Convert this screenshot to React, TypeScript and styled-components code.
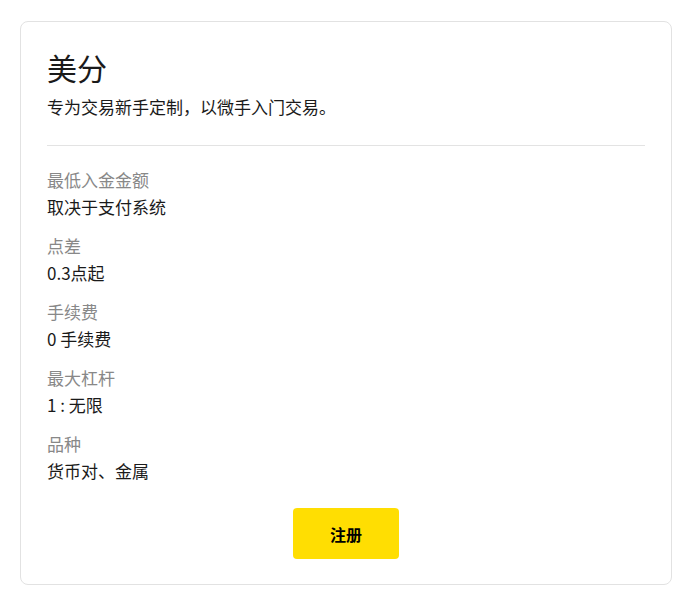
import styled, { createGlobalStyle } from "styled-components";

const GlobalStyle = createGlobalStyle`
  body {
    margin: 0;
    background: #ffffff;
    font-family: "Noto Sans CJK SC", "Noto Sans", sans-serif;
    color: #1a1a1a;
  }
`;

const Page = styled.div`
  padding: 21px 18px 16px 20px;
`;

const Card = styled.div`
  border: 1px solid #e2e2e2;
  border-radius: 8px;
  padding: 24px 26px 25px 26px;
  display: flex;
  flex-direction: column;
`;

const Title = styled.h2`
  margin: 0;
  font-size: 30px;
  line-height: 42px;
  font-weight: 400;
  color: #1a1a1a;
`;

const Subtitle = styled.p`
  margin: 7px 0 0;
  font-size: 17px;
  line-height: 24px;
  color: #1a1a1a;
`;

const Divider = styled.hr`
  margin: 26px 0 0;
  border: none;
  border-top: 1px solid #e3e3e3;
  height: 0;
`;

const SpecList = styled.dl`
  margin: 21px 0 0;
  display: flex;
  flex-direction: column;
  gap: 13px;
`;

const Spec = styled.div`
  display: flex;
  flex-direction: column;
`;

const Label = styled.dt`
  font-size: 17px;
  line-height: 26px;
  color: #888888;
`;

const Value = styled.dd`
  margin: 1px 0 0;
  font-size: 17px;
  line-height: 26px;
  color: #1a1a1a;
`;

const SignUp = styled.button`
  align-self: center;
  margin-top: 24px;
  width: 106px;
  height: 51px;
  border: none;
  border-radius: 4px;
  background: #ffde02;
  color: #000;
  font-family: inherit;
  font-size: 16px;
  font-weight: 700;
  cursor: pointer;
`;

const specs = [
  { label: "最低入金金额", value: "取决于支付系统" },
  { label: "点差", value: "0.3点起" },
  { label: "手续费", value: "0 手续费" },
  { label: "最大杠杆", value: "1 : 无限" },
  { label: "品种", value: "货币对、金属" },
];

function App() {
  return (
    <>
      <GlobalStyle />
      <Page>
        <Card>
          <Title>美分</Title>
          <Subtitle>专为交易新手定制，以微手入门交易。</Subtitle>
          <Divider />
          <SpecList>
            {specs.map((s) => (
              <Spec key={s.label}>
                <Label>{s.label}</Label>
                <Value>{s.value}</Value>
              </Spec>
            ))}
          </SpecList>
          <SignUp>注册</SignUp>
        </Card>
      </Page>
    </>
  );
}

export default App;
